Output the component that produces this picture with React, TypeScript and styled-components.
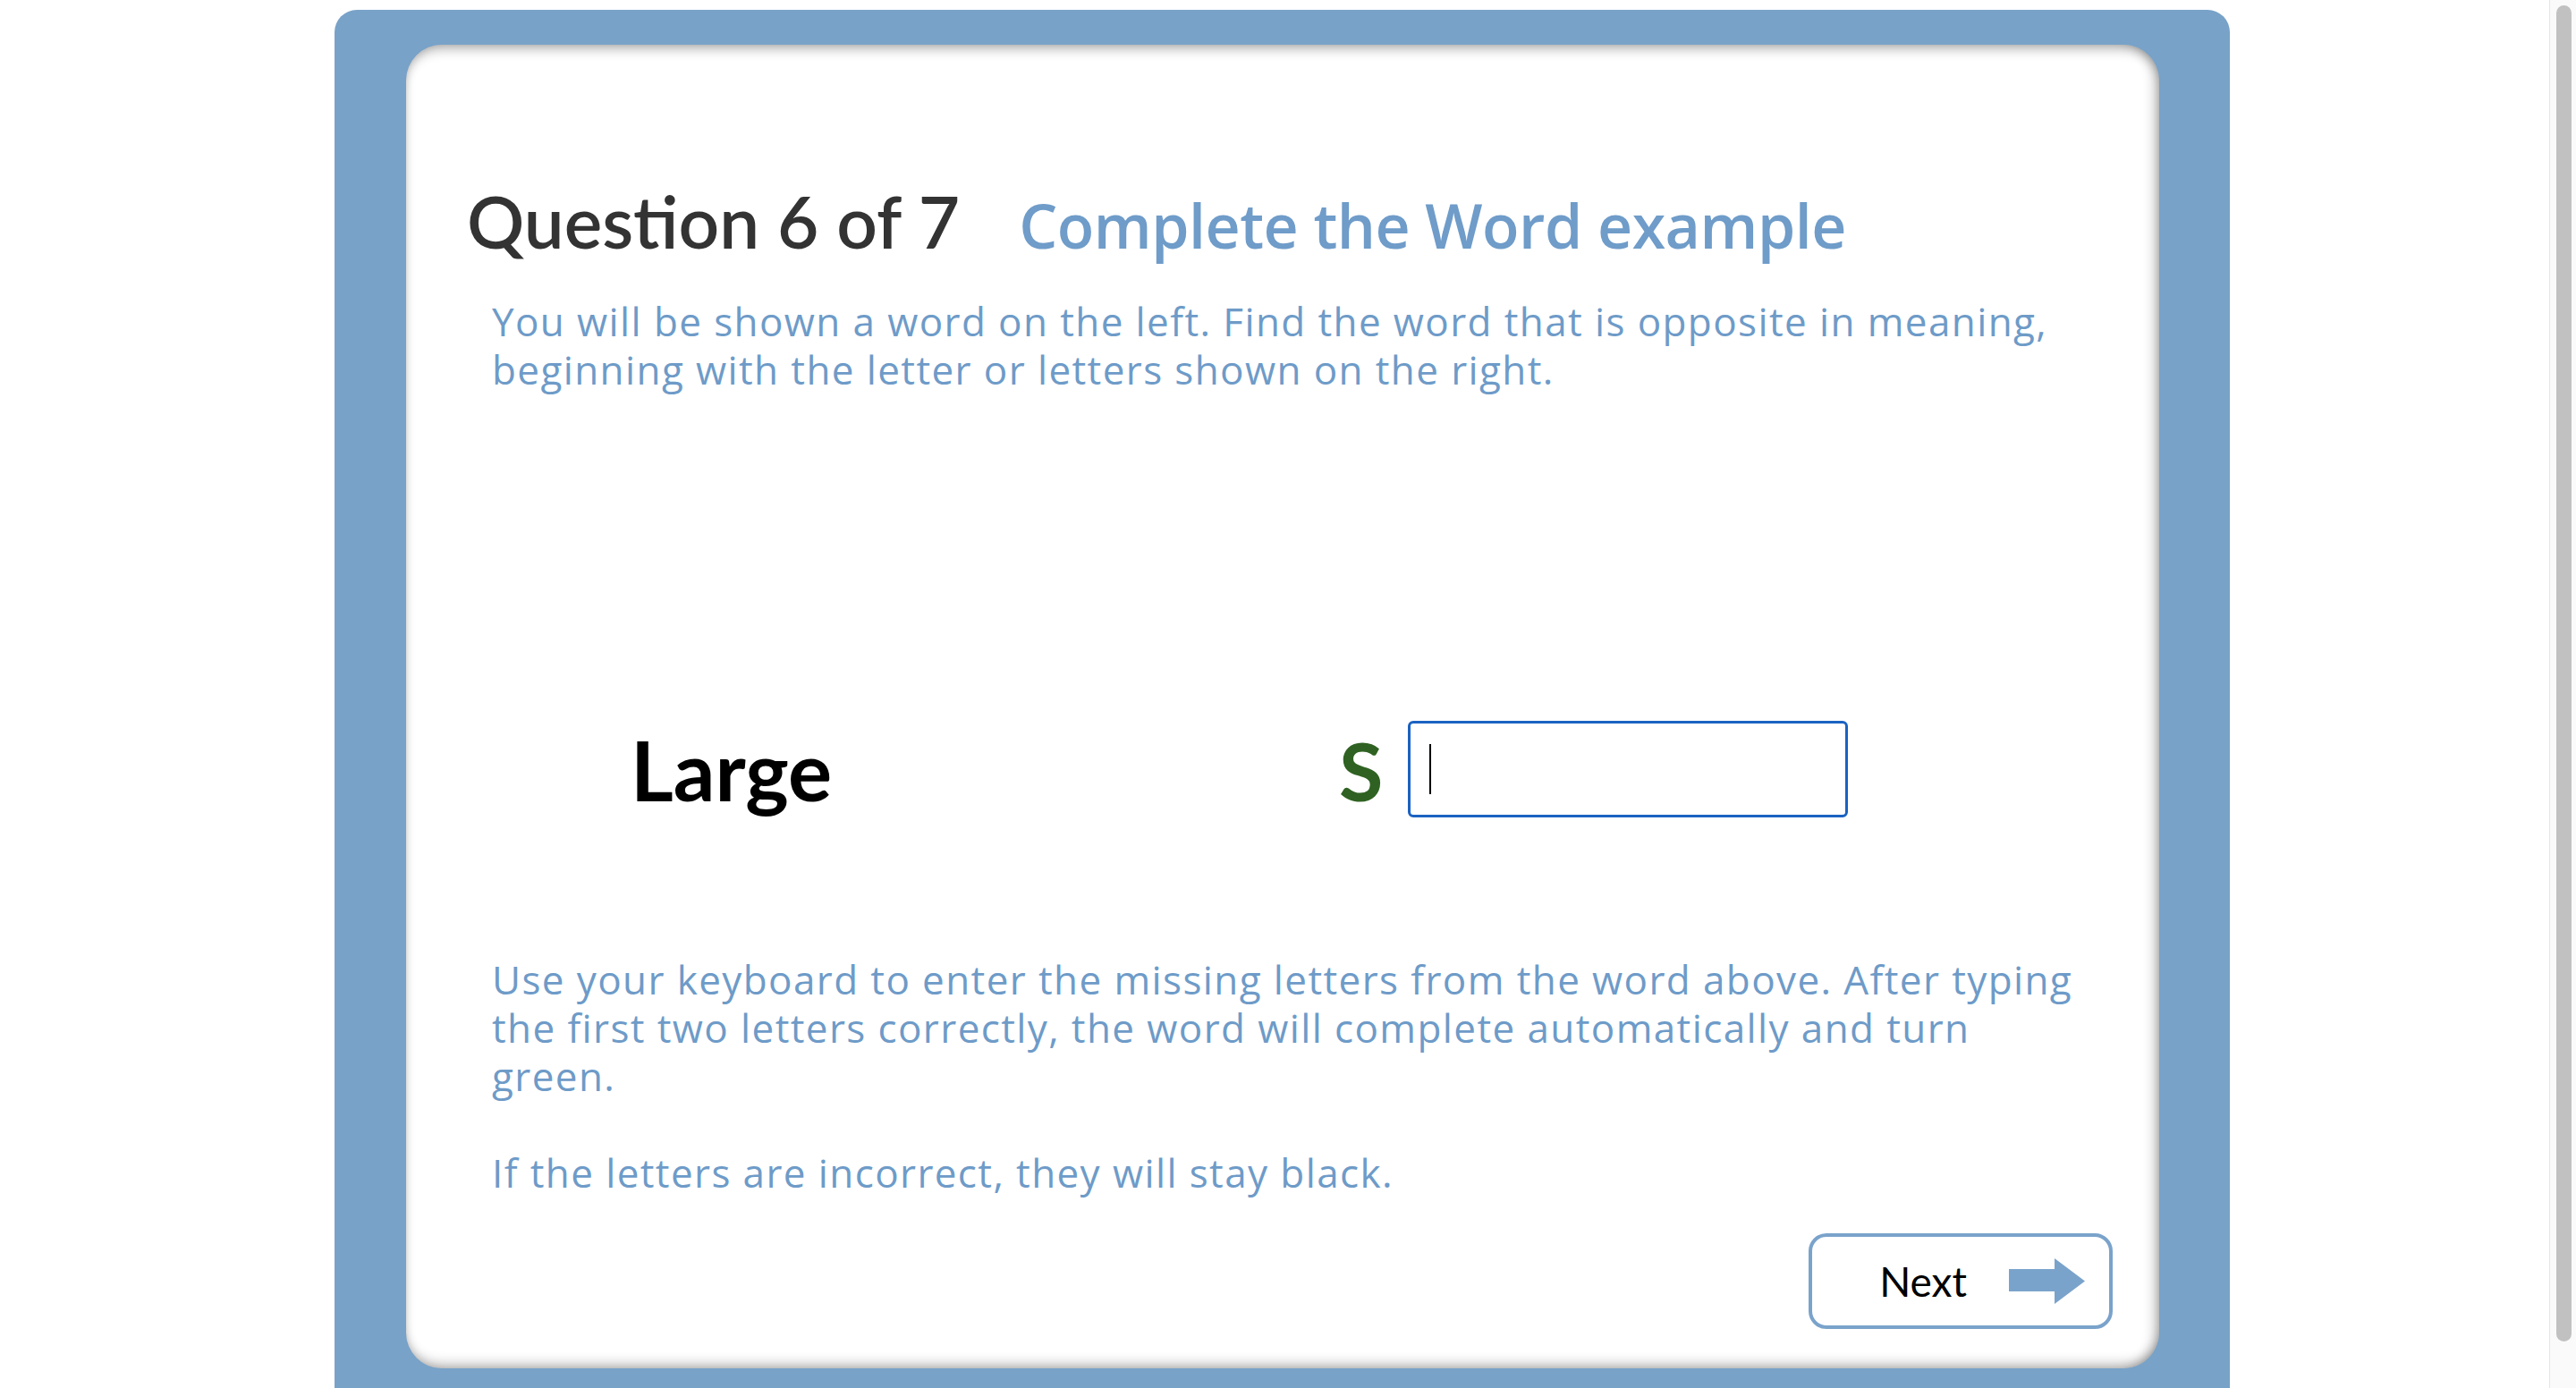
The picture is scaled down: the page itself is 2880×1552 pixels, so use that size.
import React from 'react';
import styled, { createGlobalStyle } from 'styled-components';

const GlobalStyle = createGlobalStyle`
  html, body {
    margin: 0;
    padding: 0;
    height: 100%;
    overflow: hidden;
    background: #ffffff;
  }
  body {
    font-family: "Open Sans", Lato, sans-serif;
  }
`;

const Page = styled.div`
  height: 1552px;
  overflow: hidden;
  padding: 11px 0 0 374px;
  box-sizing: border-box;
`;

const Frame = styled.div`
  width: 2119px;
  box-sizing: border-box;
  padding: 39px 79px 40px 80px;
  background: #78a2c8;
  border-radius: 25px 25px 0 0;
`;

const Card = styled.div`
  height: 1480px;
  box-sizing: border-box;
  display: flex;
  flex-direction: column;
  padding: 157px 52px 44px 68px;
  background: #ffffff;
  border-radius: 40px;
  box-shadow: inset 0 12px 14px -8px rgba(0, 0, 0, 0.32),
    inset -12px 0 14px -8px rgba(0, 0, 0, 0.3),
    inset 0 -12px 14px -8px rgba(0, 0, 0, 0.3),
    inset 8px 0 12px -8px rgba(0, 0, 0, 0.14);
`;

const Header = styled.div`
  display: flex;
  align-items: baseline;
  gap: 66px;
  line-height: 1;
`;

const QuestionCount = styled.h1`
  margin: 0;
  font-family: Lato, sans-serif;
  font-size: 80px;
  font-weight: 600;
  color: #333333;
`;

const Title = styled.h2`
  margin: 0;
  font-size: 68px;
  font-weight: 600;
  letter-spacing: -0.5px;
  color: #6f9cc9;
`;

const Instructions = styled.div<{ $top: number }>`
  margin-top: ${(p) => p.$top}px;
  padding-left: 28px;
  width: 1775px;
`;

const Text = styled.p`
  margin: 0 0 54px;
  font-size: 44px;
  line-height: 54px;
  letter-spacing: 1.4px;
  color: #6e9bc8;
  &:last-child {
    margin-bottom: 0;
  }
`;

const WordRow = styled.div`
  margin-top: 366px;
  display: grid;
  grid-template-columns: 792px auto auto;
  justify-content: start;
  align-items: center;
  padding-left: 183px;
  height: 108px;
`;

const Word = styled.span`
  font-family: Lato, sans-serif;
  font-size: 92px;
  font-weight: 700;
  color: #000000;
  line-height: 1;
  margin-top: 2px;
`;

const Prefix = styled.span`
  font-family: Lato, sans-serif;
  font-size: 90px;
  font-weight: 700;
  color: #2f6222;
  line-height: 1;
  margin-right: 28px;
  margin-top: 2px;
`;

const InputWrap = styled.div`
  position: relative;
  width: 492px;
  height: 108px;
`;

const AnswerInput = styled.input`
  width: 100%;
  height: 100%;
  box-sizing: border-box;
  padding: 0 20px;
  border: 3px solid #1b62c2;
  border-radius: 6px;
  outline: none;
  font-family: Lato, sans-serif;
  font-size: 46px;
  color: #000000;
  caret-color: transparent;
  background: #ffffff;
`;

const Caret = styled.span`
  position: absolute;
  left: 24px;
  top: 26px;
  width: 2px;
  height: 56px;
  background: #000000;
  pointer-events: none;
`;

const Footer = styled.div`
  margin-top: auto;
  display: flex;
  justify-content: flex-end;
`;

const NextButton = styled.button`
  width: 340px;
  height: 107px;
  box-sizing: border-box;
  display: flex;
  align-items: center;
  justify-content: flex-end;
  gap: 47px;
  padding: 0 27px 0 0;
  border: 4px solid #7aa3cb;
  border-radius: 20px;
  background: #ffffff;
  font-family: Lato, sans-serif;
  font-size: 46px;
  color: #000000;
  cursor: pointer;
`;

const Scrollbar = styled.div`
  position: fixed;
  top: 0;
  right: 0;
  width: 30px;
  height: 100%;
  background: #fafafa;
  border-left: 1px solid #e6e6e6;
  box-sizing: border-box;
  padding: 6px 5px 0 7px;
`;

const Thumb = styled.div`
  height: 1494px;
  border-radius: 9px;
  background: #c1c1c1;
`;

const Arrow = () => (
  <svg width="85" height="51" viewBox="0 0 85 51" aria-hidden="true">
    <path d="M0 12 H51 V0 L85 25.5 L51 51 V37 H0 Z" fill="#7aa3cb" />
  </svg>
);

const App = () => {
  return (
    <>
      <GlobalStyle />
      <Page>
        <Frame>
          <Card>
            <Header>
              <QuestionCount>Question 6 of 7</QuestionCount>
              <Title>Complete the Word example</Title>
            </Header>
            <Instructions $top={45}>
              <Text>
                You will be shown a word on the left. Find the word that is opposite in meaning,
                beginning with the letter or letters shown on the right.
              </Text>
            </Instructions>
            <WordRow>
              <Word>Large</Word>
              <Prefix>S</Prefix>
              <InputWrap>
                <AnswerInput type="text" aria-label="Answer" />
                <Caret />
              </InputWrap>
            </WordRow>
            <Instructions $top={154}>
              <Text>
                Use your keyboard to enter the missing letters from the word above. After typing
                the first two letters correctly, the word will complete automatically and turn
                green.
              </Text>
              <Text>If the letters are incorrect, they will stay black.</Text>
            </Instructions>
            <Footer>
              <NextButton type="button">
                Next
                <Arrow />
              </NextButton>
            </Footer>
          </Card>
        </Frame>
      </Page>
      <Scrollbar aria-hidden="true">
        <Thumb />
      </Scrollbar>
    </>
  );
};

export default App;
